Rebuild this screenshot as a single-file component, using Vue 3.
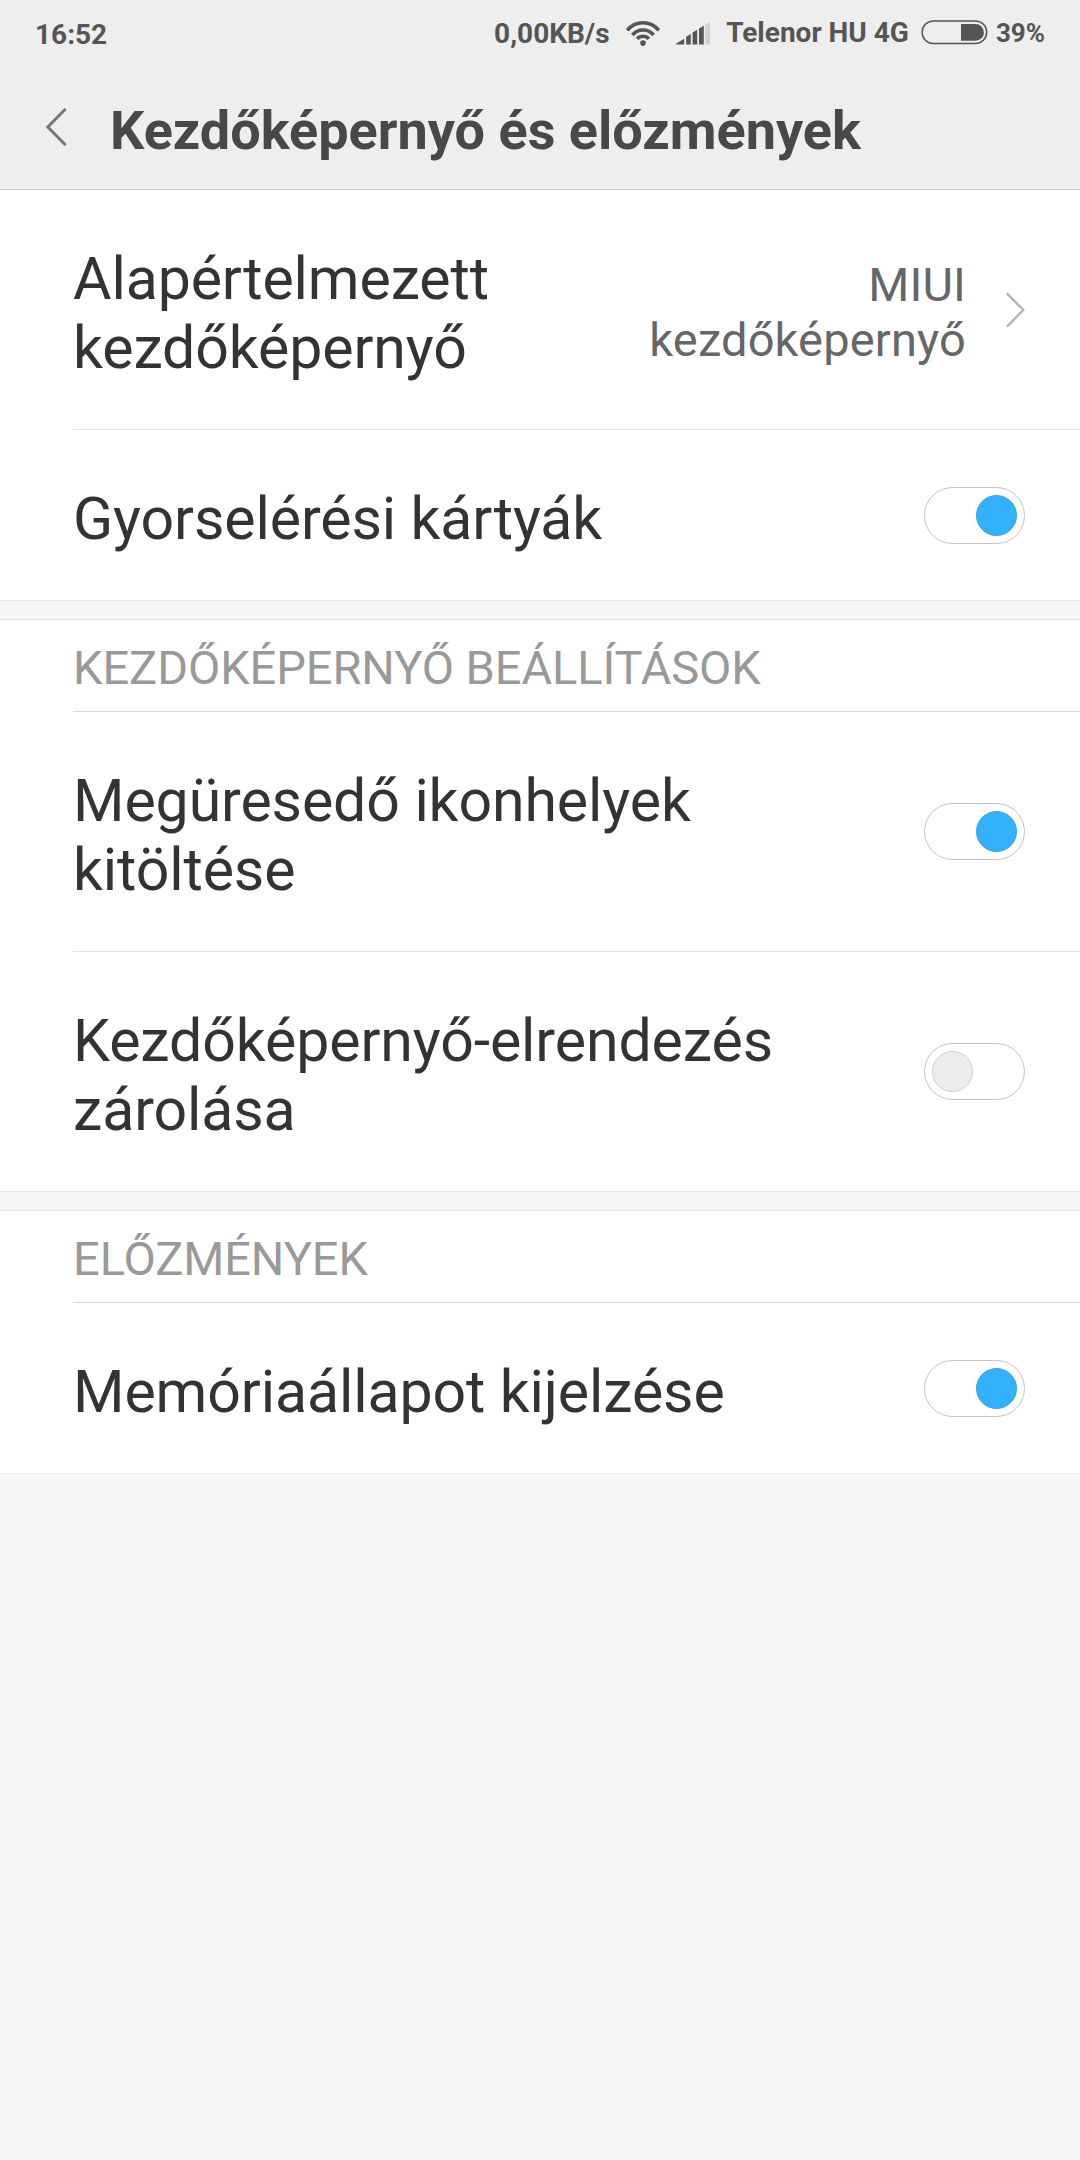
<script setup>
import { reactive } from 'vue'

const groups = reactive([
  {
    title: '',
    rows: [
      { label: 'Alapértelmezett kezdőképernyő', value: 'MIUI kezdőképernyő' },
      { label: 'Gyorselérési kártyák', on: true },
    ],
  },
  {
    title: 'KEZDŐKÉPERNYŐ BEÁLLÍTÁSOK',
    rows: [
      { label: 'Megüresedő ikonhelyek kitöltése', on: true },
      { label: 'Kezdőképernyő-elrendezés zárolása', on: false },
    ],
  },
  {
    title: 'ELŐZMÉNYEK',
    rows: [{ label: 'Memóriaállapot kijelzése', on: true }],
  },
])
</script>

<template>
  <div class="screen">
    <header class="header">
      <div class="status">
        <span class="time">16:52</span>
        <span class="speed">0,00KB/s</span>
        <svg class="wifi" width="36" height="27" viewBox="0 0 36 27">
          <g fill="none" stroke="#555" stroke-width="3.6">
            <path d="M2.2 10.3A20.3 20.3 0 0 1 33.8 10.3" />
            <path d="M7.4 15A13.8 13.8 0 0 1 28.6 15" />
            <path d="M12.2 18.9A7.6 7.6 0 0 1 23.8 18.9" />
          </g>
          <circle cx="18" cy="23.1" r="2.8" fill="#555" />
        </svg>
        <svg class="signal" width="34" height="23" viewBox="0 0 34 23">
          <g fill="#555">
            <path d="M0 22.6V21.8L8.2 16.8V22.6Z" />
            <path d="M10.2 22.6V14.8L14.8 12V22.6Z" />
            <path d="M16.6 22.6V10.6L21.2 7.8V22.6Z" />
            <path d="M23 22.6V6.6L27.8 3.8V22.6Z" />
          </g>
          <path d="M29.2 22.6V2.8L34 0V22.6Z" fill="#d2d2d2" />
        </svg>
        <span class="carrier">Telenor HU 4G</span>
        <svg class="battery" width="67" height="25" viewBox="0 0 67 25">
          <rect x="1.1" y="1" width="64.6" height="22.6" rx="11.3" fill="none" stroke="#555" stroke-width="1.5" />
          <path d="M40 4H54.5A8.4 8.4 0 0 1 54.5 20.8H40Z" fill="#555" />
        </svg>
        <span class="percent">39%</span>
      </div>
      <div class="titlebar">
        <svg class="back" width="22" height="40" viewBox="0 0 22 40">
          <path d="M19.8 2.8L2.8 20L19.8 37.2" fill="none" stroke="#777" stroke-width="3" stroke-linecap="round" />
        </svg>
        <h1>Kezdőképernyő és előzmények</h1>
      </div>
    </header>

    <section v-for="(group, i) in groups" :key="i" class="group">
      <h2 v-if="group.title">{{ group.title }}</h2>
      <div v-for="row in group.rows" :key="row.label" class="row">
        <div class="label">{{ row.label }}</div>
        <template v-if="row.value">
          <div class="value">{{ row.value }}</div>
          <svg class="chevron" width="20" height="36" viewBox="0 0 20 36">
            <path d="M2.5 2L18.3 18L2.5 34" fill="none" stroke="#b2b2b2" stroke-width="2.4" stroke-linecap="round" />
          </svg>
        </template>
        <button v-else class="switch" :class="{ on: row.on }" @click="row.on = !row.on">
          <span class="knob"></span>
        </button>
      </div>
    </section>
  </div>
</template>

<style>
body {
  background: #f7f7f7;
}
</style>

<style scoped>
.screen {
  width: 1080px;
  min-height: 2160px;
  background: #f7f7f7;
  font-family: Roboto, sans-serif;
}
.header {
  box-sizing: border-box;
  height: 190px;
  background: #eeeeee;
  border-bottom: 1px solid #c8c8c8;
}
.status {
  display: flex;
  align-items: flex-start;
  height: 72px;
  padding: 0 35px;
  font-size: 28px;
  line-height: 33px;
  font-weight: 700;
  color: #555;
  box-sizing: border-box;
  white-space: nowrap;
}
.time {
  margin-top: 18px;
  margin-right: auto;
}
.speed {
  margin-top: 17px;
}
.wifi {
  margin: 19.5px 0 0 15px;
}
.signal {
  margin: 22px 0 0 15.5px;
}
.carrier {
  margin: 16px 0 0 16px;
}
.battery {
  margin: 20px 0 0 12px;
}
.percent {
  margin: 18px 0 0 8px;
  font-size: 26px;
  line-height: 30px;
}
.titlebar {
  display: flex;
  align-items: flex-start;
  padding-left: 45px;
}
.back {
  margin-top: 35px;
}
h1 {
  margin: 27px 0 0 43px;
  font-size: 54px;
  line-height: 63px;
  font-weight: 700;
  color: #484848;
  white-space: nowrap;
}
.group {
  background: #fff;
}
.group + .group {
  margin-top: 18px;
  border-top: 1px solid #e5e5e5;
}
.group:not(:last-child) {
  border-bottom: 1px solid #ebebeb;
}
.group:last-child {
  box-shadow: 0 1px 0 #f0f0f0;
}
h2 {
  margin: 0 0 0 73px;
  padding: 20px 0 16px;
  font-size: 47px;
  line-height: 55px;
  letter-spacing: -0.07px;
  font-weight: 400;
  color: #999;
  border-bottom: 1px solid #d8d8d8;
}
.row {
  display: flex;
  align-items: flex-start;
  margin-left: 73px;
  padding-right: 55px;
  border-bottom: 1px solid #e0e0e0;
}
.row:last-child {
  border-bottom: 0;
}
.label {
  flex: 1;
  padding: 54px 60px 47px 0;
  font-size: 59px;
  line-height: 69px;
  letter-spacing: -0.1px;
  color: #333;
}
.value {
  width: 330px;
  margin-top: 67px;
  font-size: 47px;
  line-height: 55px;
  letter-spacing: 0.15px;
  color: #666;
  text-align: right;
}
.chevron {
  align-self: center;
  margin-left: 39px;
}
.switch {
  position: relative;
  align-self: center;
  box-sizing: border-box;
  flex: none;
  width: 101px;
  height: 57px;
  padding: 0 7px;
  display: flex;
  align-items: center;
  background: #fff;
  border: 1px solid #c4c4c4;
  border-radius: 29px;
}
.switch.on {
  justify-content: flex-end;
}
.knob {
  box-sizing: border-box;
  width: 41px;
  height: 41px;
  border-radius: 50%;
  background: #ececec;
  border: 1px solid #cfcfcf;
}
.switch.on .knob {
  background: #33b1ff;
  border-color: #3ba0df;
}
</style>
